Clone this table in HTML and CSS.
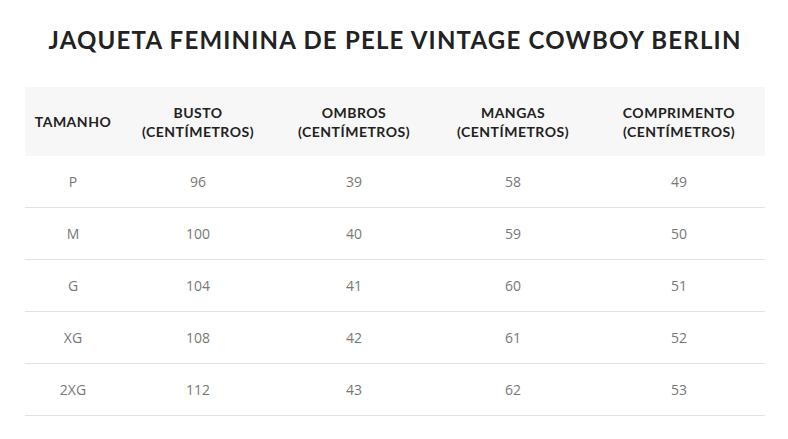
FILE: index.html
```html
<!DOCTYPE html>
<html lang="pt">
<head>
<meta charset="utf-8">
<link rel="stylesheet" href="styles.css">
</head>
<body>
<div class="page">
  <h1 class="title">JAQUETA FEMININA DE PELE VINTAGE COWBOY BERLIN</h1>
  <table class="sizes">
    <thead>
      <tr>
        <th class="c1">TAMANHO</th>
        <th class="c2">BUSTO<br>(CENTÍMETROS)</th>
        <th class="c3">OMBROS<br>(CENTÍMETROS)</th>
        <th class="c4">MANGAS<br>(CENTÍMETROS)</th>
        <th class="c5">COMPRIMENTO<br>(CENTÍMETROS)</th>
      </tr>
    </thead>
    <tbody>
      <tr><td>P</td><td>96</td><td>39</td><td>58</td><td>49</td></tr>
      <tr><td>M</td><td>100</td><td>40</td><td>59</td><td>50</td></tr>
      <tr><td>G</td><td>104</td><td>41</td><td>60</td><td>51</td></tr>
      <tr><td>XG</td><td>108</td><td>42</td><td>61</td><td>52</td></tr>
      <tr><td>2XG</td><td>112</td><td>43</td><td>62</td><td>53</td></tr>
    </tbody>
  </table>
</div>
</body>
</html>
```
FILE: styles.css
```css
html, body {
  margin: 0;
  padding: 0;
  background: #ffffff;
}
.page {
  padding: 26px 23px 0 25px;
}
.title {
  margin: 0 0 33px 0;
  text-align: center;
  font-family: "Lato", "Open Sans", sans-serif;
  font-weight: 700;
  font-size: 24px;
  line-height: 28px;
  letter-spacing: 1.2px;
  color: #222222;
}
.sizes {
  width: 740px;
  border-collapse: collapse;
  table-layout: fixed;
}
.sizes th {
  background: #f7f7f7;
  height: 69px;
  padding: 0;
  font-family: "Lato", "Open Sans", sans-serif;
  font-weight: 700;
  font-size: 14px;
  line-height: 19px;
  letter-spacing: 0.5px;
  color: #222222;
  text-align: center;
  vertical-align: middle;
}
.c1 { width: 96px; }
.c2 { width: 154px; }
.c3 { width: 158px; }
.c4 { width: 160px; }
.c5 { width: 172px; }
.sizes td {
  height: 51px;
  padding: 0;
  border-bottom: 1px solid #e3e3e3;
  font-family: "Open Sans", "Noto Sans", sans-serif;
  font-size: 14px;
  color: #777777;
  text-align: center;
  vertical-align: middle;
}
```
